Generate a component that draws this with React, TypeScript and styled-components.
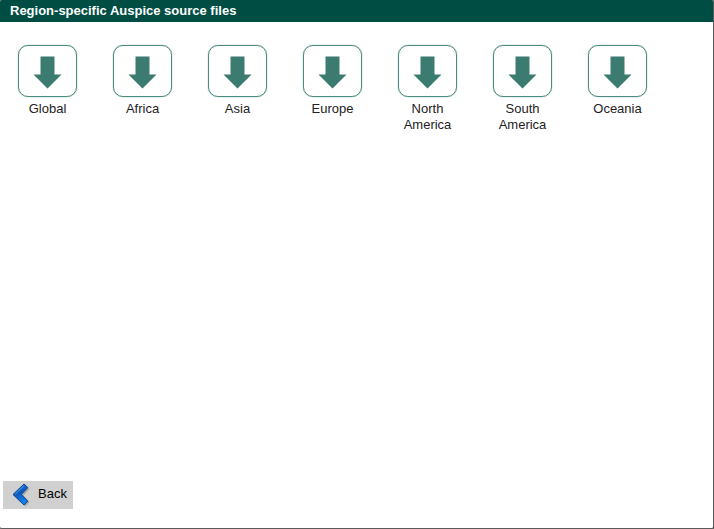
import React from "react";
import styled, { createGlobalStyle } from "styled-components";

const GlobalStyle = createGlobalStyle`
  *, *::before, *::after { box-sizing: border-box; }
  body {
    margin: 0;
    background: #5a5a5a;
    font-family: "Liberation Sans", Arial, sans-serif;
    font-size: 13px;
    line-height: 16px;
    color: #222;
  }
`;

const Dialog = styled.main`
  display: flex;
  flex-direction: column;
  min-height: 100vh;
  background: #fff;
  border: solid #5a5a5a;
  border-width: 0 1px 1px 0;
  border-radius: 2px;
  overflow: hidden;
`;

const TitleBar = styled.h1`
  margin: 0;
  padding: 3px 10px;
  height: 22px;
  background: #004d43;
  color: #fff;
  font-size: 13px;
  line-height: 16px;
  font-weight: bold;
`;

const RegionList = styled.ul`
  display: flex;
  flex-wrap: wrap;
  gap: 16px 36px;
  flex: 1;
  align-content: flex-start;
  margin: 0;
  padding: 23px 18px;
  list-style: none;
`;

const RegionItem = styled.li`
  width: 59px;
`;

const RegionButton = styled.button`
  display: flex;
  flex-direction: column;
  align-items: center;
  gap: 4px;
  width: 100%;
  padding: 0;
  border: 0;
  background: none;
  color: inherit;
  font: inherit;
  text-align: center;
  cursor: pointer;
`;

const IconFrame = styled.span`
  display: flex;
  align-items: center;
  justify-content: center;
  width: 100%;
  height: 52px;
  padding-top: 2px;
  border: 1px solid #4c8a7f;
  border-radius: 10px;
  box-shadow: 0 0 1px #3c7b70;
`;

const Footer = styled.footer`
  padding: 0 3px 19px;
`;

const BackButton = styled.button`
  display: flex;
  align-items: center;
  gap: 6px;
  height: 28px;
  padding: 0 6px 2px 8px;
  border: 0;
  background: #d0d0d0;
  color: #000;
  font: inherit;
  cursor: pointer;

  svg {
    margin-top: 2px;
  }
`;

const DownArrow = () => (
  <svg width="29" height="33" viewBox="0 0 29 33" aria-hidden="true">
    <path d="M7.5 0.5H21.5V18.5H28.5L14.5 32.5L0.5 18.5H7.5Z" fill="#3c7b70" />
  </svg>
);

const BackChevron = () => (
  <svg width="21" height="24" viewBox="0 0 21 24" aria-hidden="true">
    <defs>
      <linearGradient id="chevron" x1="0" y1="0" x2="0.3" y2="1">
        <stop offset="0" stopColor="#2a85e0" />
        <stop offset="0.5" stopColor="#0b58bd" />
        <stop offset="1" stopColor="#1484e8" />
      </linearGradient>
    </defs>
    <path d="M14 2.5L18.5 6L12.5 12.5L18.5 19L14.5 23.5L4 13Z" fill="#777" opacity="0.5" />
    <path
      d="M13 1L16.8 4.5L10.2 11.5L16.8 18L13 22L2 11.5Z"
      fill="url(#chevron)"
      stroke="#0d438f"
      strokeWidth="1"
      strokeLinejoin="round"
    />
    <path d="M12.8 2.8L4.2 11.2" stroke="#4a9bea" strokeWidth="1" fill="none" />
  </svg>
);

const regions = ["Global", "Africa", "Asia", "Europe", "North America", "South America", "Oceania"];

export default function App() {
  return (
    <>
      <GlobalStyle />
      <Dialog>
        <TitleBar>Region-specific Auspice source files</TitleBar>
        <RegionList>
          {regions.map((region) => (
            <RegionItem key={region}>
              <RegionButton type="button">
                <IconFrame>
                  <DownArrow />
                </IconFrame>
                <span>{region}</span>
              </RegionButton>
            </RegionItem>
          ))}
        </RegionList>
        <Footer>
          <BackButton type="button">
            <BackChevron />
            Back
          </BackButton>
        </Footer>
      </Dialog>
    </>
  );
}
